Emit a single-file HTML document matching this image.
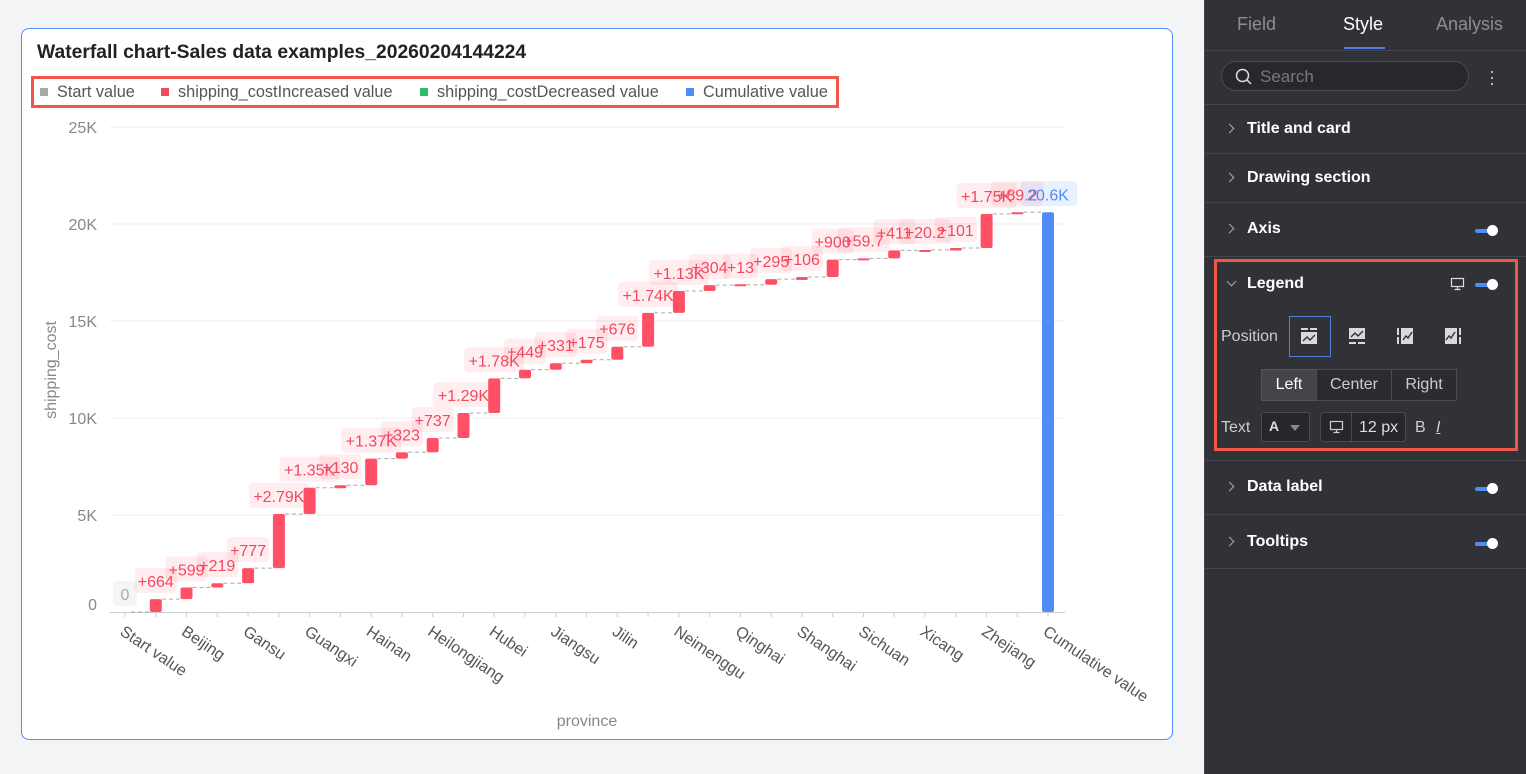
<!DOCTYPE html>
<html><head><meta charset="utf-8"><style>
body{margin:0;width:1526px;height:774px;background:#f3f4f6;font-family:"Liberation Sans",sans-serif;position:relative;overflow:hidden}
.card{position:absolute;left:21px;top:28px;width:1152px;height:712px;background:#fff;border:1px solid #4d8ef7;border-radius:8px;box-sizing:border-box}
.title{position:absolute;left:37px;top:42px;font-size:19.3px;font-weight:bold;color:#222}
.leg{position:absolute;left:31px;top:76px;width:808px;height:32px;border:3px solid #f0574a;box-sizing:border-box;font-size:16.3px;color:#555}
.leg span{position:absolute;top:4px;white-space:nowrap}
.leg i{display:inline-block;width:8px;height:8px;margin-right:9px;vertical-align:1px}
.panel{position:absolute;left:1204px;top:0;width:322px;height:774px;background:#313238;color:#fff;border-left:1px solid #44454b}
.tab{position:absolute;top:14px;font-size:18px;color:#8d8e93}
.hl{position:absolute;left:0;width:322px;height:1px;background:#45464c}
.sec{position:absolute;left:42px;font-size:16px;font-weight:bold;color:#fff}
.chev{position:absolute;left:21px;width:6px;height:6px;border-right:1.3px solid #aaa;border-top:1.3px solid #aaa;transform:rotate(45deg)}
.tg{position:absolute;left:270px;width:20px;height:4px;background:#4e8cf6;border-radius:2px}
.tg:after{content:"";position:absolute;right:-3px;top:-4px;width:11px;height:11px;border-radius:50%;background:#fff}
.lbl{position:absolute;font-size:16px;color:#ccc}
.seg{position:absolute;top:369px;height:32px;box-sizing:border-box;border:1px solid #4a4b52;background:#2b2c31;font-size:16px;color:#ccc;text-align:center;line-height:30px}
</style></head><body>
<div class="card"></div>
<div class="title">Waterfall chart-Sales data examples_20260204144224</div>
<div class="leg">
<span style="left:6px"><i style="background:#a8a8a8"></i>Start value</span>
<span style="left:127px"><i style="background:#f5475e"></i>shipping_costIncreased value</span>
<span style="left:386px"><i style="background:#2cbe64"></i>shipping_costDecreased value</span>
<span style="left:652px"><i style="background:#4e8cf6"></i>Cumulative value</span>
</div>
<svg style="position:absolute;left:0;top:0" width="1200" height="774" font-family="Liberation Sans, sans-serif">
<g stroke="#eeeeef" stroke-width="1"><path d="M110 127H1065M110 224H1065M110 321H1065M110 418H1065M110 515H1065"/></g>
<g font-size="16" fill="#888" text-anchor="end"><text x="97" y="133">25K</text><text x="97" y="230">20K</text><text x="97" y="327">15K</text><text x="97" y="424">10K</text><text x="97" y="521">5K</text><text x="97" y="610">0</text></g>
<text x="56" y="370" font-size="16" fill="#888" text-anchor="middle" transform="rotate(-90 56 370)">shipping_cost</text>
<path d="M110 612.5H1065" stroke="#ccc"/>
<path stroke="#ccc" d="M125 612v5M155.8 612v5M186.5 612v5M217.3 612v5M248.1 612v5M278.9 612v5M309.6 612v5M340.4 612v5M371.2 612v5M401.9 612v5M432.7 612v5M463.5 612v5M494.2 612v5M525 612v5M555.8 612v5M586.6 612v5M617.3 612v5M648.1 612v5M678.9 612v5M709.6 612v5M740.4 612v5M771.2 612v5M801.9 612v5M832.7 612v5M863.5 612v5M894.2 612v5M925 612v5M955.8 612v5M986.6 612v5M1017.3 612v5M1048 612v5"/>
<path fill="none" stroke="#aaa" stroke-dasharray="4 3" d="M131 612H150M162 599.1H180.5M192.5 587.5H211.3M223.3 583.2H242.1M254.1 568.1H272.9M284.9 514H303.6M315.6 487.7H334.4M346.4 485.2H365.2M377.2 458.6H395.9M407.9 452.3H426.7M438.7 438H457.5M469.5 413H488.2M500.2 378.4H519M531 369.7H549.8M561.8 363.2H580.6M592.6 359.8H611.3M623.3 346.7H642.1M654.1 312.9H672.9M684.9 291H703.6M715.6 285.1H734.4M746.4 284.8H765.2M777.2 279.1H795.9M807.9 277H826.7M838.7 259.6H857.5M869.5 258.4H888.2M900.2 250.4H919M931 250H949.8M961.8 248H980.6M992.6 214H1011.3M1023.3 212.3H1042"/>
<g fill="#ff5066">
<rect x="149.8" y="599.1" width="12" height="12.9" rx="2"/><rect x="180.5" y="587.5" width="12" height="11.6" rx="2"/><rect x="211.3" y="583.2" width="12" height="4.3" rx="2"/><rect x="242.1" y="568.1" width="12" height="15.1" rx="2"/><rect x="272.9" y="514" width="12" height="54.1" rx="2"/><rect x="303.6" y="487.7" width="12" height="26.3" rx="2"/><rect x="334.4" y="485.2" width="12" height="3" rx="1.5"/><rect x="365.2" y="458.6" width="12" height="26.6" rx="2"/><rect x="395.9" y="452.3" width="12" height="6.3" rx="2"/><rect x="426.7" y="438" width="12" height="14.3" rx="2"/><rect x="457.5" y="413" width="12" height="25" rx="2"/><rect x="488.2" y="378.4" width="12" height="34.6" rx="2"/><rect x="519" y="369.7" width="12" height="8.7" rx="2"/><rect x="549.8" y="363.2" width="12" height="6.5" rx="2"/><rect x="580.6" y="359.8" width="12" height="3.4" rx="1.5"/><rect x="611.3" y="346.7" width="12" height="13.1" rx="2"/><rect x="642.1" y="312.9" width="12" height="33.8" rx="2"/><rect x="672.9" y="291" width="12" height="21.9" rx="2"/><rect x="703.6" y="285.1" width="12" height="5.9" rx="2"/><rect x="734.4" y="284.3" width="12" height="2" rx="1"/><rect x="765.2" y="279.1" width="12" height="5.7" rx="2"/><rect x="795.9" y="277" width="12" height="3" rx="1.5"/><rect x="826.7" y="259.6" width="12" height="17.4" rx="2"/><rect x="857.5" y="258.4" width="12" height="2" rx="1"/><rect x="888.2" y="250.4" width="12" height="8" rx="2"/><rect x="919" y="250" width="12" height="2" rx="1"/><rect x="949.8" y="248" width="12" height="2.5" rx="1"/><rect x="980.6" y="214" width="12" height="34" rx="2"/><rect x="1011.3" y="212.3" width="12" height="2" rx="1"/>
</g>
<rect x="1042" y="212.3" width="12" height="399.7" rx="2" fill="#4e8cf6"/>
<g fill="#ff4d63" fill-opacity="0.1">
<rect x="134.8" y="568.1" width="42" height="25" rx="4"/><rect x="165.5" y="556.5" width="42" height="25" rx="4"/><rect x="196.3" y="552.2" width="42" height="25" rx="4"/><rect x="227.1" y="537.1" width="42" height="25" rx="4"/><rect x="248.9" y="483" width="60" height="25" rx="4"/><rect x="279.6" y="456.7" width="60" height="25" rx="4"/><rect x="319.4" y="454.2" width="42" height="25" rx="4"/><rect x="341.2" y="427.6" width="60" height="25" rx="4"/><rect x="380.9" y="421.3" width="42" height="25" rx="4"/><rect x="411.7" y="407" width="42" height="25" rx="4"/><rect x="433.5" y="382" width="60" height="25" rx="4"/><rect x="464.2" y="347.4" width="60" height="25" rx="4"/><rect x="504" y="338.7" width="42" height="25" rx="4"/><rect x="534.8" y="332.2" width="42" height="25" rx="4"/><rect x="565.6" y="328.8" width="42" height="25" rx="4"/><rect x="596.3" y="315.7" width="42" height="25" rx="4"/><rect x="618.1" y="281.9" width="60" height="25" rx="4"/><rect x="648.9" y="260" width="60" height="25" rx="4"/><rect x="688.6" y="254.1" width="42" height="25" rx="4"/><rect x="723.4" y="253.8" width="34" height="25" rx="4"/><rect x="750.2" y="248.1" width="42" height="25" rx="4"/><rect x="780.9" y="246" width="42" height="25" rx="4"/><rect x="811.7" y="228.6" width="42" height="25" rx="4"/><rect x="837.5" y="227.4" width="52" height="25" rx="4"/><rect x="873.2" y="219.4" width="42" height="25" rx="4"/><rect x="899" y="219" width="52" height="25" rx="4"/><rect x="934.8" y="217" width="42" height="25" rx="4"/><rect x="956.6" y="183" width="60" height="25" rx="4"/><rect x="991.3" y="181.3" width="52" height="25" rx="4"/>
</g>
<rect x="113" y="581" width="24" height="25" rx="4" fill="#ccc" fill-opacity="0.2"/>
<rect x="1021" y="181.3" width="56" height="25" rx="4" fill="#4e8cf6" fill-opacity="0.12"/>
<text x="125" y="600" font-size="16" fill="#aaa" text-anchor="middle">0</text>
<g font-size="16" fill="#f5475e" text-anchor="middle">
<text x="155.8" y="587">+664</text><text x="186.5" y="575.5">+599</text><text x="217.3" y="571.2">+219</text><text x="248.1" y="556.1">+777</text><text x="278.9" y="502">+2.79K</text><text x="309.6" y="475.7">+1.35K</text><text x="340.4" y="473.2">+130</text><text x="371.2" y="446.6">+1.37K</text><text x="401.9" y="440.3">+323</text><text x="432.7" y="426">+737</text><text x="463.5" y="401">+1.29K</text><text x="494.2" y="366.4">+1.78K</text><text x="525" y="357.7">+449</text><text x="555.8" y="351.2">+331</text><text x="586.6" y="347.8">+175</text><text x="617.3" y="334.7">+676</text><text x="648.1" y="300.9">+1.74K</text><text x="678.9" y="279">+1.13K</text><text x="709.6" y="273.1">+304</text><text x="740.4" y="272.8">+13</text><text x="771.2" y="267.1">+295</text><text x="801.9" y="265">+106</text><text x="832.7" y="247.6">+900</text><text x="863.5" y="246.4">+59.7</text><text x="894.2" y="238.4">+411</text><text x="925" y="238">+20.2</text><text x="955.8" y="236">+101</text><text x="986.6" y="202">+1.75K</text><text x="1017.3" y="200.3">+89.2</text>
</g>
<text x="1048" y="200.3" font-size="16" fill="#4e8cf6" text-anchor="middle">20.6K</text>
<g font-size="16" fill="#555">
<text transform="translate(119 634) rotate(34)">Start value</text>
<text transform="translate(180.5 634) rotate(34)">Beijing</text>
<text transform="translate(242.1 634) rotate(34)">Gansu</text>
<text transform="translate(303.6 634) rotate(34)">Guangxi</text>
<text transform="translate(365.2 634) rotate(34)">Hainan</text>
<text transform="translate(426.7 634) rotate(34)">Heilongjiang</text>
<text transform="translate(488.2 634) rotate(34)">Hubei</text>
<text transform="translate(549.8 634) rotate(34)">Jiangsu</text>
<text transform="translate(611.3 634) rotate(34)">Jilin</text>
<text transform="translate(672.9 634) rotate(34)">Neimenggu</text>
<text transform="translate(734.4 634) rotate(34)">Qinghai</text>
<text transform="translate(795.9 634) rotate(34)">Shanghai</text>
<text transform="translate(857.5 634) rotate(34)">Sichuan</text>
<text transform="translate(919 634) rotate(34)">Xicang</text>
<text transform="translate(980.6 634) rotate(34)">Zhejiang</text>
<text transform="translate(1042 634) rotate(34)">Cumulative value</text>
</g>
<text x="587" y="726" font-size="16" fill="#888" text-anchor="middle">province</text>
</svg>

<div class="panel">
<div class="tab" style="left:32px">Field</div>
<div class="tab" style="left:138px;color:#fff">Style</div>
<div class="tab" style="left:231px">Analysis</div>
<div style="position:absolute;left:139px;top:47px;width:41px;height:2px;background:#5a78e8"></div>
<div class="hl" style="top:50px"></div>
<div style="position:absolute;left:16px;top:61px;width:248px;height:30px;border:1px solid #4a4b52;border-radius:16px;background:#27282d;box-sizing:border-box"></div>
<svg style="position:absolute;left:30px;top:68px" width="18" height="18"><circle cx="7.5" cy="7.5" r="6" fill="none" stroke="#ddd" stroke-width="1.5"/><path d="M12 12l4 4" stroke="#ddd" stroke-width="1.5"/></svg>
<div style="position:absolute;left:55px;top:67px;font-size:17px;color:#77787d">Search</div>
<div style="position:absolute;left:286px;top:69px;width:2px;height:18px;background:radial-gradient(circle,#bbb 1px,transparent 1.3px) 0 0/2px 6px"></div>
<div class="hl" style="top:104px"></div>
<div class="chev" style="top:125px"></div><div class="sec" style="top:120px">Title and card</div>
<div class="hl" style="top:153px"></div>
<div class="chev" style="top:174px"></div><div class="sec" style="top:169px">Drawing section</div>
<div class="hl" style="top:202px"></div>
<div class="chev" style="top:225px"></div><div class="sec" style="top:220px">Axis</div>
<div class="tg" style="top:229px"></div>
<div class="hl" style="top:256px"></div>
<div style="position:absolute;left:9px;top:259px;width:304px;height:192px;border:3px solid #f0574a;box-sizing:border-box"></div>
<div style="position:absolute;left:23px;top:278px;width:6px;height:6px;border-right:1.3px solid #aaa;border-bottom:1.3px solid #aaa;transform:rotate(45deg)"></div>
<div class="sec" style="top:275px">Legend</div>
<svg style="position:absolute;left:245px;top:277px" width="16" height="14"><rect x="1.5" y="1.5" width="12" height="8" fill="none" stroke="#ddd" stroke-width="1.2"/><path d="M7.5 10v2.5M4.5 12.5h6" stroke="#ddd" stroke-width="1.2"/></svg>
<div class="tg" style="top:283px"></div>
<div class="lbl" style="left:16px;top:328px">Position</div>
<div style="position:absolute;left:84px;top:316px;width:42px;height:41px;border:1px solid #4e7fe0;box-sizing:border-box"></div>
<svg style="position:absolute;left:96px;top:328px" width="220" height="18" fill="#d9d9d9">
<rect x="0" y="0" width="7" height="2"/><rect x="9" y="0" width="7" height="2"/><rect x="0" y="4" width="16" height="12"/><path d="M2 13l4-4 3 3 5-5" stroke="#313238" stroke-width="1.4" fill="none"/>
<g transform="translate(48 0)"><rect x="0" y="0" width="16" height="11"/><path d="M2 9l4-4 3 3 5-5" stroke="#313238" stroke-width="1.4" fill="none"/><rect x="0" y="14" width="7" height="2"/><rect x="9" y="14" width="7" height="2"/></g>
<g transform="translate(96 0)"><rect x="0" y="0" width="2" height="7"/><rect x="0" y="9" width="2" height="7"/><rect x="4" y="0" width="12" height="16"/><path d="M6 12l3-4 2 2 4-6" stroke="#313238" stroke-width="1.4" fill="none"/></g>
<g transform="translate(144 0)"><rect x="0" y="0" width="12" height="16"/><path d="M1 12l3-4 2 2 4-6" stroke="#313238" stroke-width="1.4" fill="none"/><rect x="14" y="0" width="2" height="7"/><rect x="14" y="9" width="2" height="7"/></g>
</svg>
<div class="seg" style="left:56px;width:56px;background:#44454b;border-color:#55565c;color:#fff">Left</div>
<div class="seg" style="left:111px;width:76px">Center</div>
<div class="seg" style="left:186px;width:66px">Right</div>
<div class="lbl" style="left:16px;top:419px">Text</div>
<div style="position:absolute;left:56px;top:412px;width:49px;height:30px;border:1px solid #4a4b52;box-sizing:border-box;background:#26272b;border-radius:3px"></div>
<div style="position:absolute;left:64px;top:418px;font-size:14px;font-weight:bold;color:#ddd">A</div>
<div style="position:absolute;left:85px;top:425px;border:5px solid transparent;border-top:6px solid #888"></div>
<div style="position:absolute;left:115px;top:412px;width:86px;height:30px;border:1px solid #4a4b52;box-sizing:border-box;background:#26272b;border-radius:4px"></div>
<div style="position:absolute;left:146px;top:413px;width:1px;height:28px;background:#4a4b52"></div>
<svg style="position:absolute;left:124px;top:420px" width="16" height="14"><rect x="1.5" y="1.5" width="12" height="8" fill="none" stroke="#ccc" stroke-width="1.2"/><path d="M7.5 10v2.5M4.5 12.5h6" stroke="#ccc" stroke-width="1.2"/></svg>
<div class="lbl" style="left:154px;top:419px;color:#ddd;font-size:16px">12 px</div>
<div class="lbl" style="left:210px;top:419px;font-size:16px">B</div>
<div class="lbl" style="left:231px;top:419px;font-size:16px;font-style:italic;text-decoration:underline">I</div>
<div class="hl" style="top:460px"></div>
<div class="chev" style="top:483px"></div><div class="sec" style="top:478px">Data label</div>
<div class="tg" style="top:487px"></div>
<div class="hl" style="top:514px"></div>
<div class="chev" style="top:538px"></div><div class="sec" style="top:533px">Tooltips</div>
<div class="tg" style="top:542px"></div>
<div class="hl" style="top:568px"></div>
</div>
</body></html>
